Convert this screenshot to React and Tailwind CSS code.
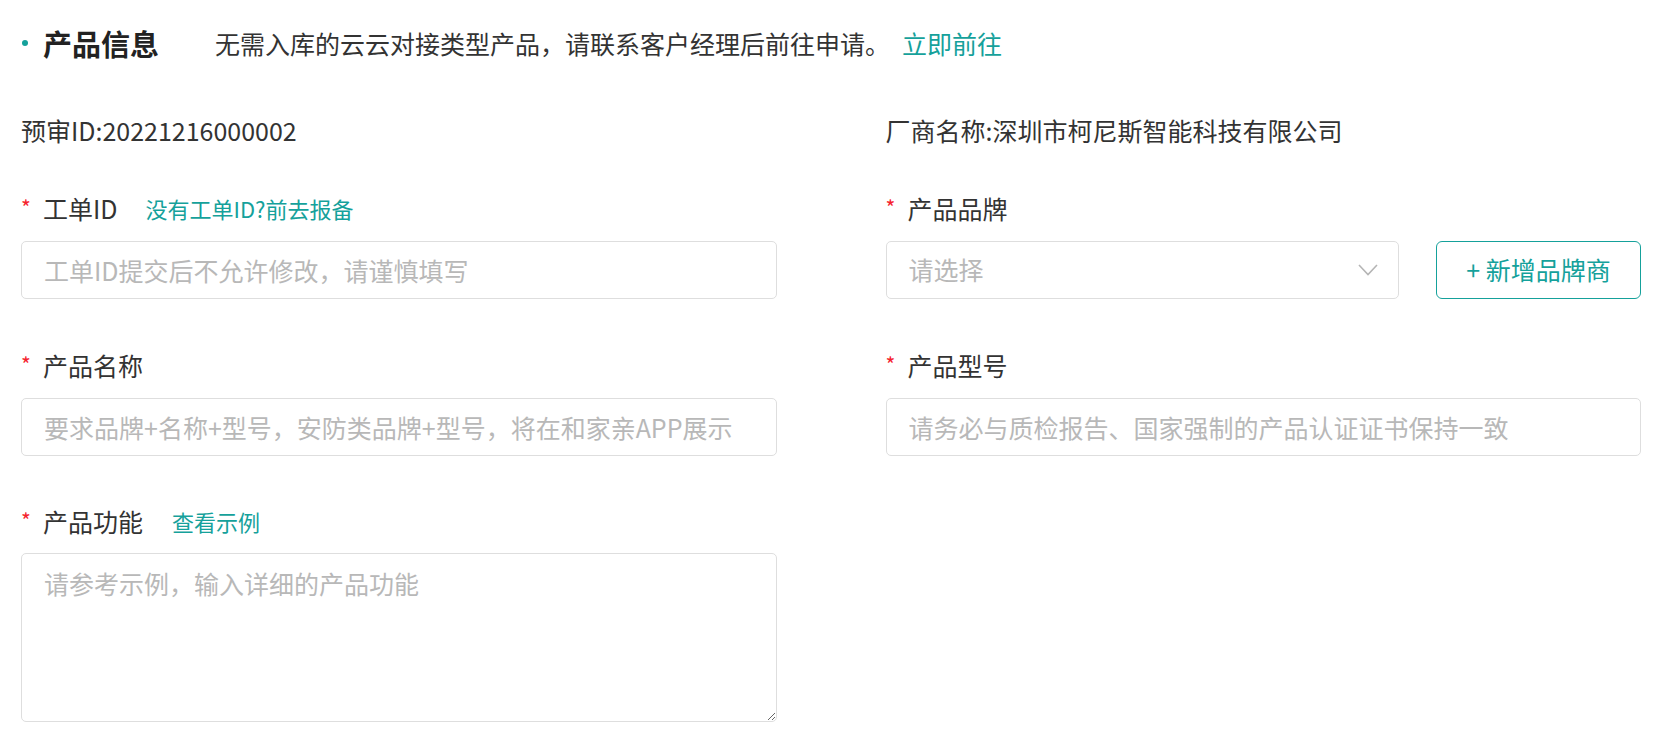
import React from 'react';

const FONT = { fontFamily: '"Noto Sans CJK SC", "Noto Sans", sans-serif' };

// Required-field label with optional teal helper link
function FieldLabel({ children, link, linkGap = 'ml-[28px]' }) {
  return (
    <div className="flex h-8 items-center">
      <span className="w-[22px] text-[21px] leading-none text-[#f5222d] relative -top-[1px]">*</span>
      <span className="text-[25px] leading-8 text-[#333]">{children}</span>
      {link && (
        <a className={`${linkGap} cursor-pointer text-[22px] leading-8 text-[#15a19b]`}>{link}</a>
      )}
    </div>
  );
}

function TextInput({ placeholder }) {
  return (
    <input
      type="text"
      placeholder={placeholder}
      className="mt-[17px] block h-[58px] w-full rounded-[5px] border border-[#dedede] bg-white px-[22px] text-[25px] text-[#333] outline-none placeholder:text-[#b8b8b8]"
    />
  );
}

export default function App() {
  return (
    <div style={FONT} className="min-h-screen bg-white pl-[21px] pr-[33px] pt-[23px] text-[#333]">
      {/* section header */}
      <div className="flex h-10 items-center">
        <span className="ml-[1px] h-[6px] w-[6px] rounded-full bg-[#15a19b]" />
        <h2 className="ml-[15px] text-[29px] font-bold leading-10 text-[#222]">产品信息</h2>
        <p className="ml-[56px] text-[25px] leading-10 text-[#333]">
          无需入库的云云对接类型产品，请联系客户经理后前往申请。
          <a className="ml-[12px] cursor-pointer text-[#15a19b]">立即前往</a>
        </p>
      </div>

      <div className="mt-[51px] grid grid-cols-2 gap-x-[109px] text-[25px] leading-8">
        <div>预审ID:20221216000002</div>
        <div>厂商名称:深圳市柯尼斯智能科技有限公司</div>
      </div>

      <div className="mt-[46px] grid grid-cols-2 gap-x-[109px]">
        <div>
          <FieldLabel link="没有工单ID?前去报备">工单ID</FieldLabel>
          <TextInput placeholder="工单ID提交后不允许修改，请谨慎填写" />
        </div>
        <div>
          <FieldLabel>产品品牌</FieldLabel>
          <div className="mt-[17px] flex items-center">
            <div className="flex h-[58px] w-[513px] cursor-pointer items-center justify-between rounded-[5px] border border-[#dedede] pl-[22px] pr-[20px]">
              <span className="text-[25px] text-[#b8b8b8]">请选择</span>
              <svg width="20" height="12" viewBox="0 0 20 12" fill="none">
                <path d="M1 1l9 9.5L19 1" stroke="#b5b5b5" strokeWidth="1.6" />
              </svg>
            </div>
            <button className="ml-auto h-[58px] w-[205px] rounded-[6px] border border-[#15a19b] text-[25px] text-[#15a19b]">
              + 新增品牌商
            </button>
          </div>
        </div>
      </div>

      <div className="mt-[50px] grid grid-cols-2 gap-x-[109px]">
        <div>
          <FieldLabel>产品名称</FieldLabel>
          <TextInput placeholder="要求品牌+名称+型号，安防类品牌+型号，将在和家亲APP展示" />
        </div>
        <div>
          <FieldLabel>产品型号</FieldLabel>
          <TextInput placeholder="请务必与质检报告、国家强制的产品认证证书保持一致" />
        </div>
      </div>

      <div className="mt-[49px] grid grid-cols-2 gap-x-[109px]">
        <div>
          <FieldLabel link="查看示例" linkGap="ml-[29px]">产品功能</FieldLabel>
          <textarea
            placeholder="请参考示例，输入详细的产品功能"
            className="mt-[16px] block h-[169px] w-full rounded-[5px] border border-[#dedede] px-[22px] pt-[13px] text-[25px] leading-8 text-[#333] outline-none placeholder:text-[#b8b8b8]"
          />
        </div>
        <div />
      </div>
    </div>
  );
}
